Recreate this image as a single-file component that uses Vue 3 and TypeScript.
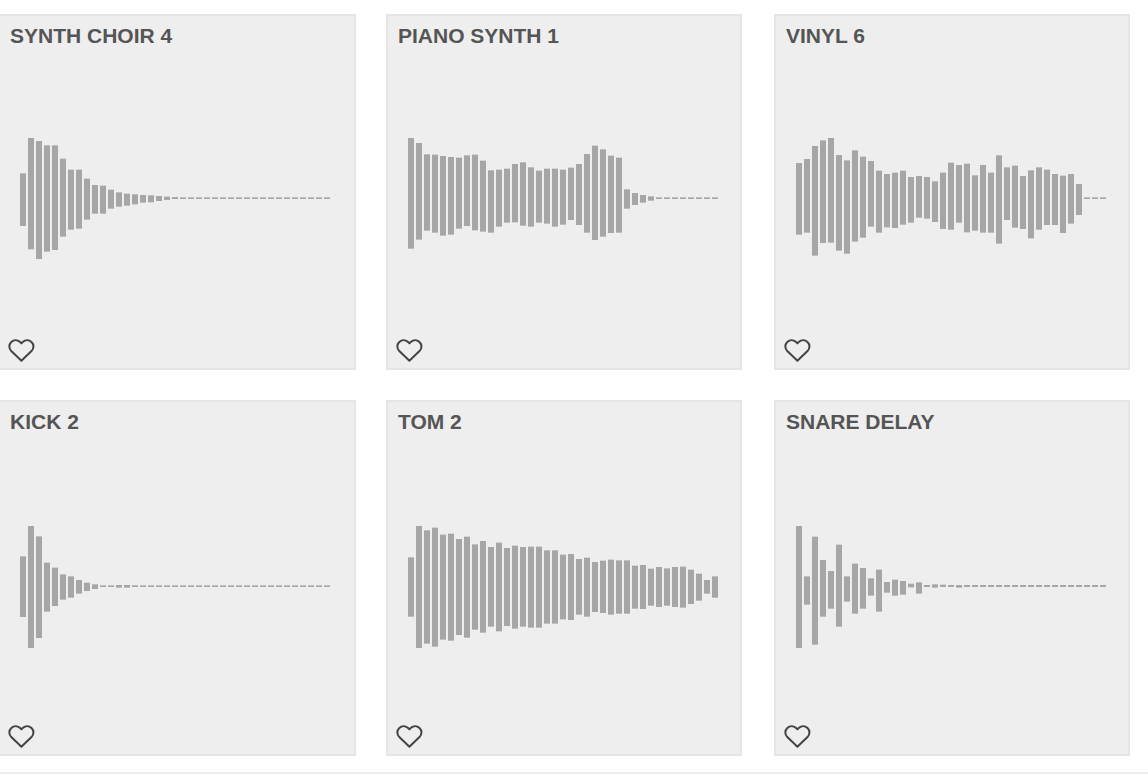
<script setup lang="ts">
import { ref } from 'vue'

type Peak = [top: number, bottom: number]

interface Clip {
  id: string
  title: string
  shift: number
  peaks: Peak[]
}

const flat = (count: number, top: number, bottom: number): Peak[] =>
  Array.from({ length: count }, (): Peak => [top, bottom])

// Peaks are top and bottom edges, in thirds of a pixel.
const clips: Clip[] = [
  {
    id: 'synth-choir-4',
    title: 'SYNTH CHOIR 4',
    shift: -24,
    peaks: [
      [130, 288], [24, 358], [33, 387], [46, 365], [46, 360], [86, 320], [119, 299], [119, 296],
      [146, 269], [165, 251], [167, 251], [179, 236], [187, 230], [191, 227], [193, 223], [195, 218],
      [196, 217], [198, 213], [200, 210], [201, 207], ...flat(19, 202, 207),
    ],
  },
  {
    id: 'piano-synth-1',
    title: 'PIANO SYNTH 1',
    shift: -24,
    peaks: [
      [24, 356], [39, 329], [73, 302], [74, 308], [78, 317], [81, 314], [83, 296], [76, 288],
      [74, 301], [92, 305], [121, 308], [119, 290], [116, 278], [102, 277], [97, 287], [112, 290],
      [122, 278], [116, 281], [116, 290], [119, 284], [113, 270], [102, 285], [72, 308], [47, 330],
      [58, 320], [77, 309], [83, 308], [178, 236], [189, 225], [195, 218], [199, 212],
      ...flat(8, 202, 207),
    ],
  },
  {
    id: 'vinyl-6',
    title: 'VINYL 6',
    shift: -24,
    peaks: [
      [99, 314], [87, 308], [48, 377], [31, 339], [24, 338], [75, 362], [91, 371], [61, 335],
      [80, 323], [93, 290], [122, 308], [132, 292], [128, 294], [122, 284], [141, 278], [138, 263],
      [141, 266], [154, 276], [128, 297], [98, 299], [105, 278], [101, 307], [136, 302], [105, 308],
      [128, 308], [76, 341], [112, 270], [107, 293], [138, 297], [121, 325], [112, 299], [119, 285],
      [132, 285], [137, 309], [132, 281], [162, 255], ...flat(3, 202, 207),
    ],
  },
  {
    id: 'kick-2',
    title: 'KICK 2',
    shift: -27,
    peaks: [
      [124, 306], [33, 399], [64, 369], [143, 290], [158, 273], [178, 254], [184, 248], [195, 236],
      [203, 228], [208, 222], [211, 216], [211, 216], [210, 218], [210, 218], ...flat(25, 211, 216),
    ],
  },
  {
    id: 'tom-2',
    title: 'TOM 2',
    shift: -27,
    peaks: [
      [127, 305], [33, 399], [46, 386], [38, 395], [59, 374], [56, 377], [72, 360], [65, 368],
      [88, 344], [78, 353], [96, 335], [83, 349], [99, 333], [92, 341], [96, 335], [95, 338],
      [95, 338], [106, 326], [106, 326], [119, 313], [117, 315], [132, 299], [128, 305], [141, 291],
      [137, 294], [134, 299], [136, 296], [136, 296], [152, 281], [150, 282], [161, 272], [156, 276],
      [160, 272], [156, 276], [155, 278], [164, 267], [176, 257], [195, 236], [184, 248],
    ],
  },
  {
    id: 'snare-delay',
    title: 'SNARE DELAY',
    shift: -27,
    peaks: [
      [33, 399], [184, 269], [65, 389], [135, 305], [168, 281], [89, 335], [184, 260], [146, 296],
      [159, 281], [190, 242], [164, 290], [201, 233], [194, 242], [198, 239], [206, 217], [202, 236],
      [210, 216], [208, 218], [209, 216], [210, 216], [210, 218], ...flat(18, 210, 216),
    ],
  },
]

const liked = ref<string[]>([])

function toggleLike(id: string): void {
  liked.value = liked.value.includes(id)
    ? liked.value.filter((other) => other !== id)
    : [...liked.value, id]
}
</script>

<template>
  <main class="library">
    <section class="grid">
      <article v-for="clip in clips" :key="clip.id" class="card">
        <h2 class="title">{{ clip.title }}</h2>
        <svg class="wave" viewBox="0 0 930 378" aria-hidden="true">
          <g :transform="`translate(0 ${clip.shift})`">
            <rect
              v-for="(peak, i) in clip.peaks"
              :key="i"
              :x="i * 24"
              :y="peak[0]"
              width="18"
              :height="peak[1] - peak[0]"
            />
          </g>
        </svg>
        <button
          class="like"
          :class="{ liked: liked.includes(clip.id) }"
          type="button"
          :aria-label="`Like ${clip.title}`"
          :aria-pressed="liked.includes(clip.id)"
          @click="toggleLike(clip.id)"
        >
          <svg class="heart" viewBox="0 0 28 26" aria-hidden="true">
            <path
              d="M13.4 22.8 3.3 13C.7 10.4.7 6.4 3.3 4C5.8 1.6 9.4 1.6 11.8 3.8L13.4 5.4L15 3.8C17.4 1.6 21 1.6 23.5 4C26.1 6.4 26.1 10.4 23.5 13Z"
            />
          </svg>
        </button>
      </article>
    </section>
    <hr class="divider" />
  </main>
</template>

<style>
body {
  margin: 0;
  background: #fff;
}
</style>

<style scoped>
.library {
  padding-top: 14px;
  overflow: hidden;
  font-family: 'Liberation Sans', Arial, Helvetica, sans-serif;
}

.grid {
  display: grid;
  grid-template-columns: repeat(3, minmax(0, 1fr));
  gap: 30px 32px;
  margin: 0 18px 0 -2px;
}

.card {
  display: flex;
  flex-direction: column;
  box-sizing: border-box;
  min-height: 356px;
  padding: 8px 10px 4px;
  border: 2px solid #e5e5e5;
  background: #eee;
}

.card:nth-child(3n + 1) {
  margin-right: -2px;
}

.title {
  margin: 0;
  color: #555;
  font-size: 21px;
  font-weight: 700;
  line-height: 24px;
}

.wave {
  display: block;
  width: calc(100% - 20px);
  max-width: 310px;
  margin: 90px 10px 0;
  fill: #a6a6a6;
}

.like {
  width: 28px;
  height: 26px;
  margin: auto 0 0 -2px;
  padding: 0;
  border: 0;
  background: none;
  cursor: pointer;
}

.heart {
  display: block;
  width: 28px;
  height: 26px;
  fill: none;
  stroke: #444;
  stroke-width: 2;
  stroke-linejoin: round;
}

.liked .heart {
  fill: #444;
}

.divider {
  margin: 16px 0 0;
  border: 0;
  border-top: 2px solid #eee;
}
</style>
